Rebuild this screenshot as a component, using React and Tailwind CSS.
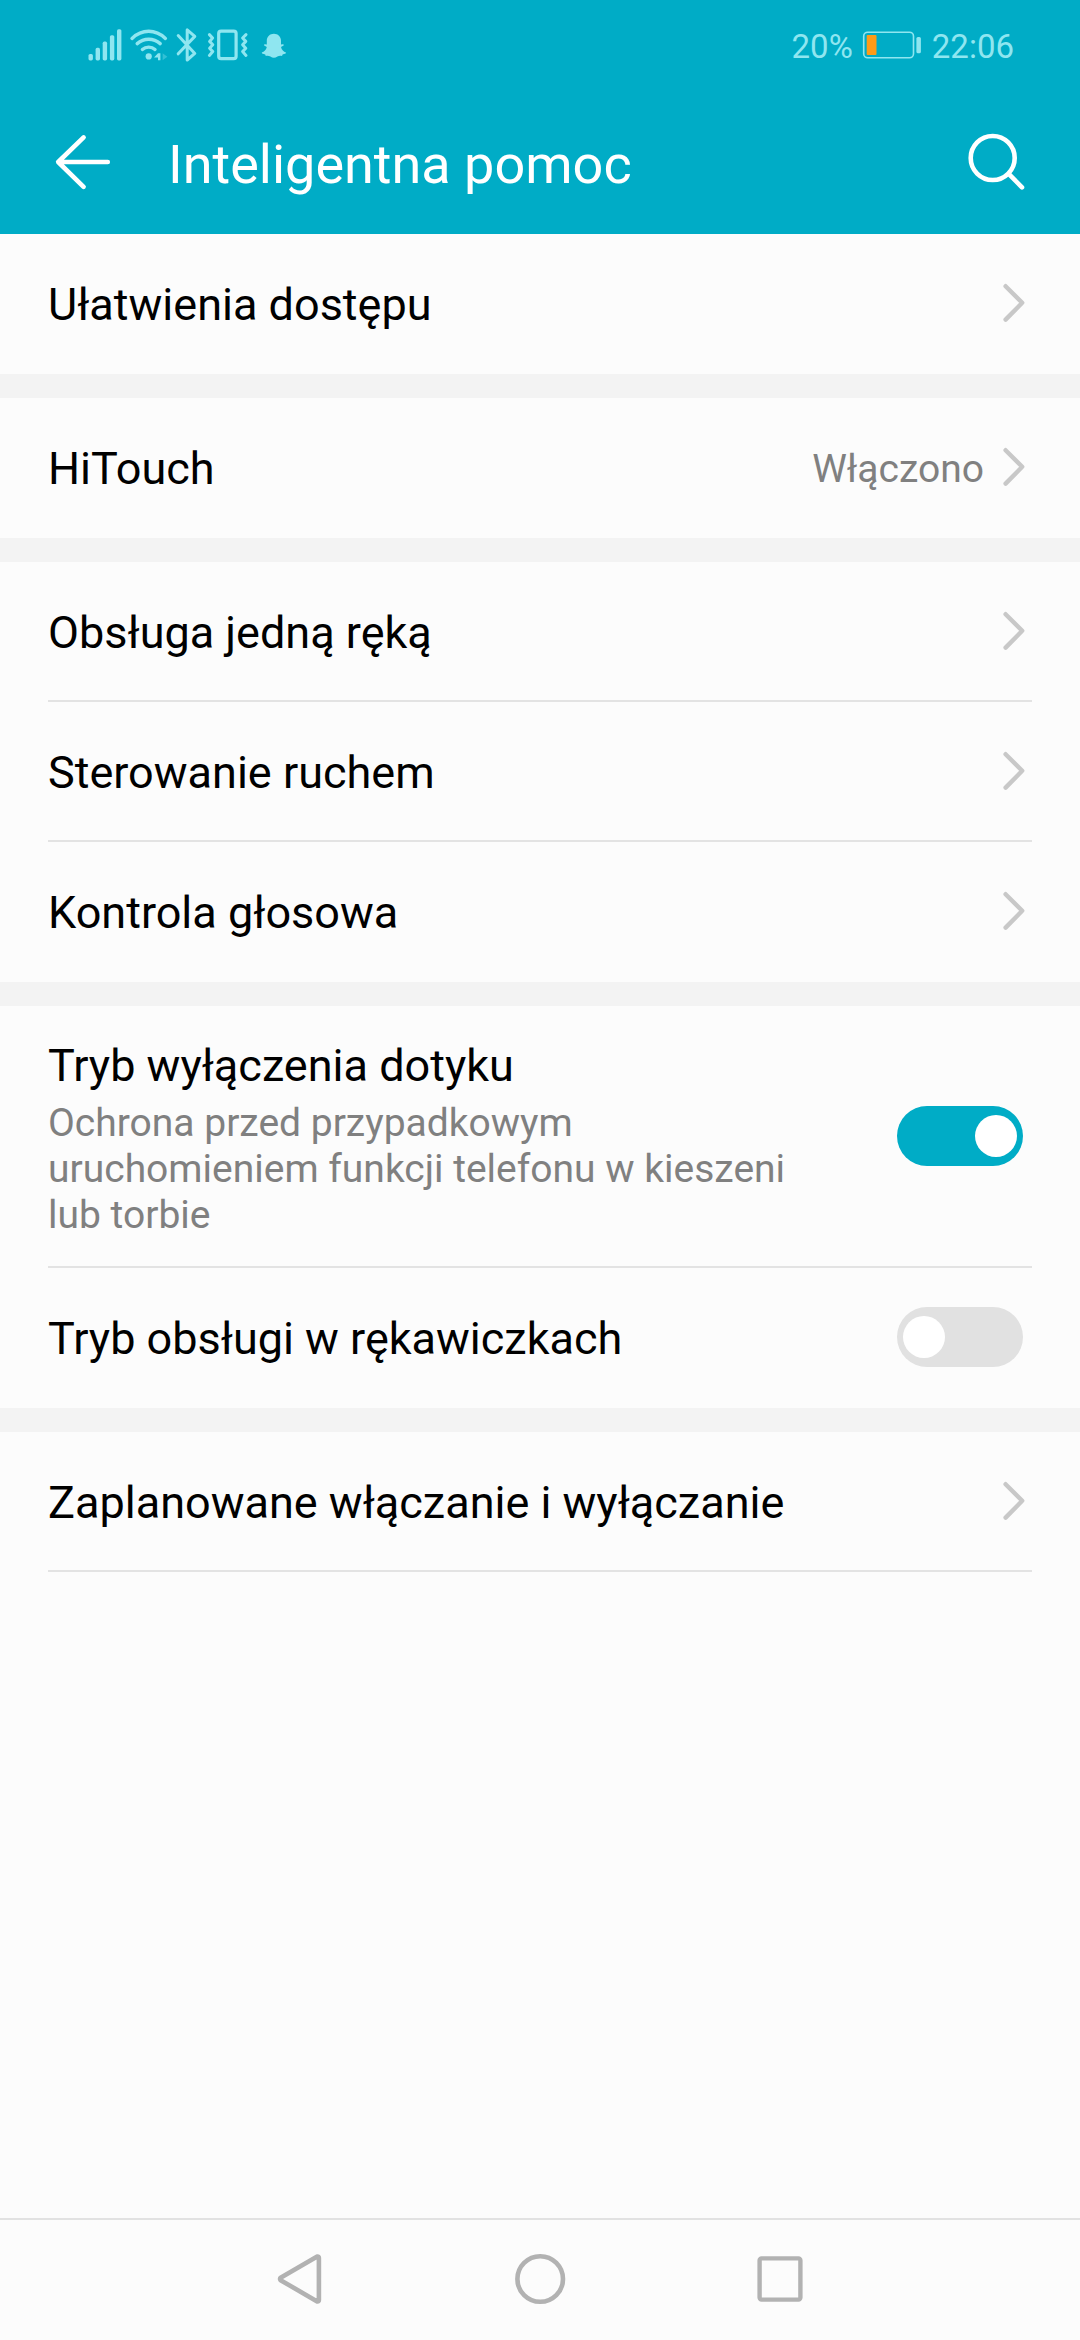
function StatusBar() {
  return (
    <div className="flex h-[90px] items-center justify-between pl-[88px] pr-[66px] text-[#8fe6f0]">
      <svg width="200" height="36" viewBox="88 27 200 36" fill="none" stroke="currentColor" strokeLinecap="round" strokeLinejoin="round">
        <g fill="currentColor" stroke="none">
          <rect x="88.5" y="54" width="4.4" height="6.4" rx="1.6" />
          <rect x="95.6" y="47.8" width="4.4" height="12.6" rx="1.6" />
          <rect x="102.7" y="41.6" width="4.4" height="18.8" rx="1.6" />
          <rect x="109.9" y="35.2" width="4.4" height="25.2" rx="1.6" />
          <rect x="117" y="29.2" width="4.4" height="31.2" rx="1.6" />
          <circle cx="148.7" cy="56.4" r="3.1" />
          <path d="M154 57.4L158 53.2H160.4V60.2H158V57.6Z" />
          <path d="M162.6 53.2L167.4 56.8L162.6 60.2Z" opacity="0.35" />
        </g>
        <g strokeWidth="3.4">
          <path d="M132 38.4Q139.5 31.3 148.7 31.3T165.4 38.4" />
          <path d="M137.2 43.6Q142.2 39.2 148.7 39.2T160.2 43.6" />
          <path d="M142.4 49.4Q145 47.1 148.7 47.1T155 49.4" />
        </g>
        <path d="M178.2 35.6L194.8 53.4L187.2 60V29.8L194.8 36.4L178.2 53.8" strokeWidth="3" />
        <rect x="218.7" y="31.2" width="17.4" height="27.4" rx="2.4" strokeWidth="3.2" />
        <path d="M209.4 34.6L212.6 38L209.6 41.4L212.8 44.8L209.6 48.2L212.8 51.6L209.4 55.4" strokeWidth="3" />
        <path d="M246 34.6L242.6 38L245.8 41.4L242.6 44.8L245.8 48.2L242.6 51.6L246 55.4" strokeWidth="3" />
        <path
          fill="currentColor"
          stroke="none"
          d="M273.9 33.8C277.8 33.8 281 36.6 281 40.8V44.6L282.8 44.2C284 44.2 284.3 45.2 283.2 45.8L281 47C281.6 49.8 283.6 51.8 286 52.6C286.2 53.6 284.6 54.2 282.6 54.5L282 56C280.4 55.7 278.8 55.7 277.4 56.6C275.2 58.2 272.6 58.2 270.4 56.6C269 55.7 267.4 55.7 265.8 56L265.2 54.5C263.2 54.2 261.6 53.6 261.8 52.6C264.2 51.8 266.2 49.8 266.8 47L264.6 45.8C263.5 45.2 263.8 44.2 265 44.2L266.8 44.6V40.8C266.8 36.6 270 33.8 273.9 33.8Z"
        />
      </svg>
      <div className="flex items-center text-[33px] leading-[40px]">
        <span className="mt-[4px]">20%</span>
        <svg className="ml-[9px] mr-[10px]" width="60" height="30" viewBox="861 30.5 60 30" fill="none">
          <rect x="862.7" y="32.7" width="49.8" height="25.6" rx="4" stroke="currentColor" strokeWidth="1.6" />
          <rect x="865.7" y="35.4" width="9.8" height="20" rx="1" fill="#ff9b17" />
          <rect x="915.4" y="37.4" width="4.5" height="16.4" rx="1.6" fill="currentColor" />
        </svg>
        <span className="mt-[4px]">22:06</span>
      </div>
    </div>
  );
}

function Header() {
  return (
    <div className="flex h-[144px] items-center pl-[54px] pr-[54px] text-white">
      <svg width="58" height="58" viewBox="54 133 58 58" fill="none" stroke="currentColor" strokeWidth="4.6" strokeLinecap="round" strokeLinejoin="round">
        <path d="M107.8 162H58.2M83.6 137.4L58.2 162L83.6 186.8" />
      </svg>
      <h1 className="ml-[56px] mt-[5px] grow text-[54px] leading-[64px]">Inteligentna pomoc</h1>
      <svg width="60" height="60" viewBox="966 132 60 60" fill="none" stroke="currentColor" strokeWidth="4.6" strokeLinecap="round">
        <circle cx="992.7" cy="158" r="22" />
        <path d="M1009 174.2L1022 187.4" />
      </svg>
    </div>
  );
}

function Chevron() {
  return (
    <svg className="mr-[6px]" width="24" height="40" viewBox="0 0 24 40" fill="none" stroke="#c8c8c8" strokeWidth="4.4" strokeLinecap="round" strokeLinejoin="round">
      <path d="M3.6 3.2L20.2 19.8L3.6 36.6" />
    </svg>
  );
}

function Toggle({ on }) {
  return (
    <div className={`mr-[9px] flex h-[60px] w-[126px] items-center rounded-full px-[6px] ${on ? "justify-end bg-[#00acc6]" : "justify-start bg-[#e1e1e1]"}`}>
      <div className="size-[42px] rounded-full bg-white" />
    </div>
  );
}

function Row({ title, detail, value, divider, children }) {
  return (
    <div className={`mx-[48px] flex items-center justify-between border-b-2 ${detail ? "h-[262px]" : "h-[140px]"} ${divider ? "border-[#e3e3e3]" : "border-transparent"}`}>
      <div className={detail ? "pt-[4px]" : "pt-[2px]"}>
        <div className="text-[45px] leading-[53px] text-black">{title}</div>
        {detail && <div className="mt-[8px] w-[780px] text-[39px] leading-[46px] text-[#808080]">{detail}</div>}
      </div>
      <div className="flex items-center">
        {value && <span className="mr-[18px] mt-[4px] text-[39px] leading-[46px] text-[#808080]">{value}</span>}
        {children}
      </div>
    </div>
  );
}

function Gap() {
  return <div className="h-[24px] bg-[#f3f3f3]" />;
}

function NavBar() {
  return (
    <div className="flex h-[122px] items-center justify-center gap-[180px] border-t-2 border-[#e2e2e2] pb-[2px]">
      <svg width="60" height="60" viewBox="0 0 60 60" fill="none" stroke="#b2b2b2" strokeWidth="4.6" strokeLinejoin="round">
        <path d="M10.6 28.7Q9.6 30 10.6 31.2L47.2 52.4Q48.9 52.6 48.9 51V9Q48.9 7.4 47.2 7.6Z" />
      </svg>
      <svg width="60" height="60" viewBox="0 0 60 60" fill="none" stroke="#b2b2b2" strokeWidth="4.6">
        <circle cx="30.2" cy="30" r="22.8" />
      </svg>
      <svg width="60" height="60" viewBox="0 0 60 60" fill="none" stroke="#b2b2b2" strokeWidth="4.4">
        <rect x="9.6" y="9.4" width="40.8" height="41.2" rx="2" />
      </svg>
    </div>
  );
}

export default function App() {
  return (
    <div className="flex h-[2340px] w-[1080px] flex-col overflow-hidden bg-[#fcfcfc] font-['Roboto',sans-serif]">
      <header className="bg-[#00acc6]">
        <StatusBar />
        <Header />
      </header>
      <main className="grow">
        <Row title="Ułatwienia dostępu"><Chevron /></Row>
        <Gap />
        <Row title="HiTouch" value="Włączono"><Chevron /></Row>
        <Gap />
        <Row title="Obsługa jedną ręką" divider><Chevron /></Row>
        <Row title="Sterowanie ruchem" divider><Chevron /></Row>
        <Row title="Kontrola głosowa"><Chevron /></Row>
        <Gap />
        <Row
          title="Tryb wyłączenia dotyku"
          detail="Ochrona przed przypadkowym uruchomieniem funkcji telefonu w kieszeni lub torbie"
          divider
        >
          <Toggle on />
        </Row>
        <Row title="Tryb obsługi w rękawiczkach"><Toggle /></Row>
        <Gap />
        <Row title="Zaplanowane włączanie i wyłączanie" divider><Chevron /></Row>
      </main>
      <NavBar />
    </div>
  );
}
